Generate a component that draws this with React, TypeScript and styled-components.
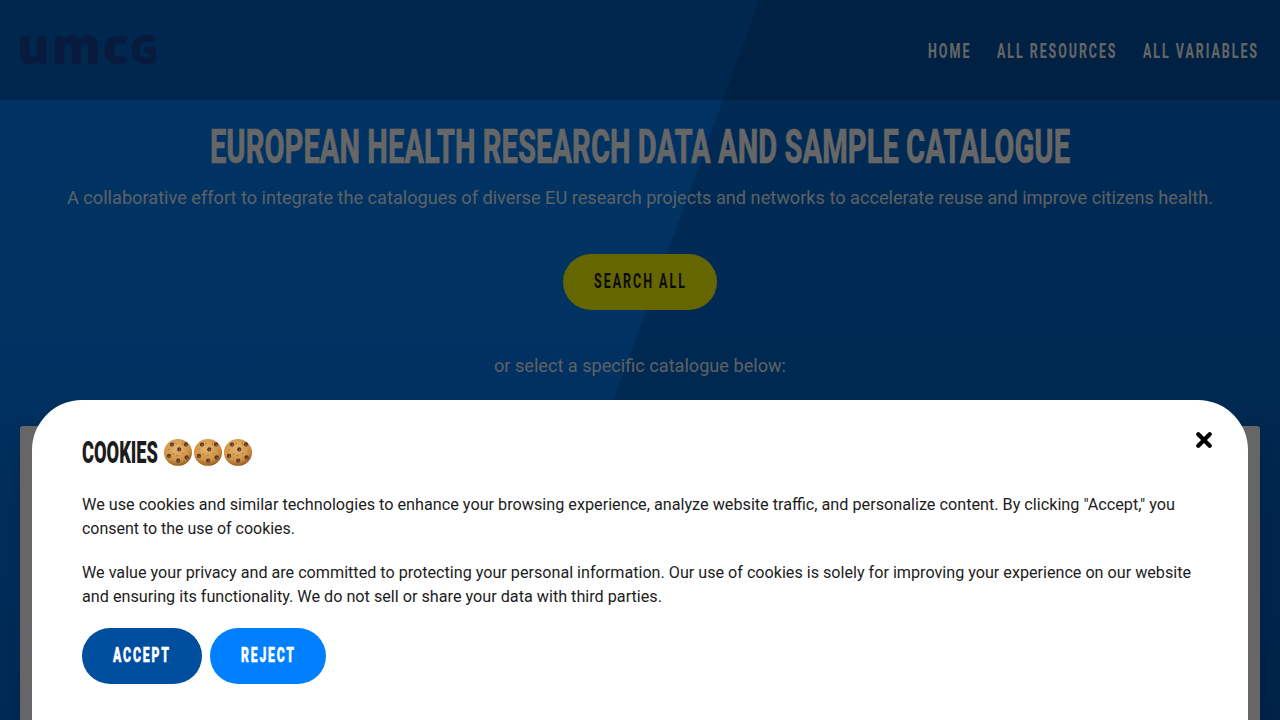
import React, { useLayoutEffect, useRef, useState } from "react";
import styled, { createGlobalStyle } from "styled-components";

const GlobalStyle = createGlobalStyle`
  * { box-sizing: border-box; }
  body { margin: 0; font-family: Roboto, sans-serif; overflow: hidden; }
  h1, h2, p { margin: 0; font-weight: inherit; }
`;

const Page = styled.div`
  height: 720px;
  overflow: hidden;
  color: #fff;
  background:
    linear-gradient(110deg, transparent 713px, rgba(0, 0, 20, 0.17) 714px),
    linear-gradient(180deg, #007ff8 0, #007df5 330px, #006bdc 720px);
`;

const Header = styled.header`
  height: 100px;
  padding: 0 23px 0 17px;
  display: flex;
  align-items: center;
  justify-content: space-between;
  background: rgba(0, 0, 0, 0.2);
`;

const Logo = styled.div`
  display: flex;
  align-items: baseline;
  height: 60px;
  gap: 1px;
  line-height: 60px;
  margin-top: -13px;
  color: #14449e;
  font-family: "Open Sans", sans-serif;
`;

const Nav = styled.nav`
  display: flex;
  gap: 27.5px;
  padding-top: 1px;
`;

const Hero = styled.main`
  display: flex;
  flex-direction: column;
  align-items: center;
`;

const Title = styled.h1`
  height: 60px;
  margin-top: 17px;
  line-height: 60px;
`;

const Lead = styled.p<{ $top: number }>`
  height: 28px;
  margin-top: ${(p) => p.$top}px;
  line-height: 28px;
  color: rgba(255, 255, 255, 0.92);
`;

const Pill = styled.button<{ $bg: string; $fg: string; $w: number }>`
  width: ${(p) => p.$w}px;
  height: 56px;
  padding: 0 2px 2px 0;
  border: 0;
  border-radius: 28px;
  display: flex;
  align-items: center;
  justify-content: center;
  background: ${(p) => p.$bg};
  color: ${(p) => p.$fg};
  font-family: inherit;
`;

const SearchWrap = styled.div`
  margin-top: 42px;
`;

const Card = styled.section`
  width: 1240px;
  height: 500px;
  margin-top: 46px;
  border-radius: 3px;
  background: #fff;
  box-shadow: 0 10px 30px rgba(0, 0, 0, 0.2);
`;

const Backdrop = styled.div`
  position: fixed;
  inset: 0;
  display: flex;
  align-items: flex-end;
  padding: 0 32px;
  background: rgba(0, 0, 0, 0.6);
`;

const Dialog = styled.section`
  width: 100%;
  height: 320px;
  padding: 34px 50px 0;
  position: relative;
  border-radius: 50px 50px 0 0;
  background: #fff;
  color: #1c1c1c;
`;

const DialogTitle = styled.h2`
  display: flex;
  align-items: center;
  height: 36px;
  line-height: 36px;
`;

const Word = styled.span`
  padding-top: 4px;
`;

const Cookies = styled.span`
  display: flex;
  gap: 2px;
  margin-left: 6px;
`;

const Paragraph = styled.p<{ $top: number }>`
  margin-top: ${(p) => p.$top}px;
  line-height: 24px;
`;

const Actions = styled.div`
  display: flex;
  gap: 8px;
  margin-top: 19px;
`;

const Close = styled.button`
  position: absolute;
  top: 32px;
  right: 36px;
  width: 16px;
  height: 16px;
  padding: 0;
  border: 0;
  background: none;
  svg { display: block; }
`;

const FitBox = styled.span<{ $w: number }>`
  display: block;
  width: ${(p) => p.$w}px;
`;

const FitText = styled.span<{ $size: number; $weight: number; $spacing: number; $stroke: number }>`
  display: inline-block;
  white-space: nowrap;
  transform-origin: 0 50%;
  font-size: ${(p) => p.$size}px;
  font-weight: ${(p) => p.$weight};
  letter-spacing: ${(p) => p.$spacing}px;
  -webkit-text-stroke: ${(p) => p.$stroke}px currentColor;
`;

type FitProps = {
  w: number;
  size: number;
  weight?: number;
  spacing?: number;
  stroke?: number;
  children: React.ReactNode;
};

/* Condenses a line of text horizontally so that it fills the given width. */
function Fit({ w, size, weight = 400, spacing = 0, stroke = 0, children }: FitProps) {
  const ref = useRef<HTMLSpanElement>(null);
  const [scale, setScale] = useState(1);
  useLayoutEffect(() => {
    const el = ref.current;
    if (!el) return;
    const natural = parseFloat(getComputedStyle(el).width) - spacing;
    setScale(w / natural);
  }, [w, spacing]);
  return (
    <FitBox $w={w}>
      <FitText
        ref={ref}
        $size={size}
        $weight={weight}
        $spacing={spacing}
        $stroke={stroke}
        style={{ transform: `scaleX(${scale})` }}
      >
        {children}
      </FitText>
    </FitBox>
  );
}

const chips = [
  [8, 6.2], [22, 6], [15.2, 11], [5, 17.5], [22.6, 19], [14.2, 22.3],
];

function Cookie() {
  return (
    <svg width="28" height="28" viewBox="0 0 28 28">
      <defs>
        <radialGradient id="dough" cx="45%" cy="35%" r="65%">
          <stop offset="0" stopColor="#e6b56e" />
          <stop offset="0.7" stopColor="#cf9346" />
          <stop offset="1" stopColor="#9b5d20" />
        </radialGradient>
      </defs>
      <ellipse cx="14" cy="14.4" rx="14" ry="13.4" fill="url(#dough)" />
      <path d="M4 12l2-1M11 5l2 1M18 15l2 1M9 15l1 2M18 4l1 3M12 18l3-1M24 12l1 2M8 23l2 1" stroke="#b57932" strokeWidth="0.8" fill="none" />
      {chips.map(([x, y]) => (
        <g key={`${x}-${y}`}>
          <circle cx={x} cy={y + 0.4} r="2.1" fill="#593321" />
          <circle cx={x + 0.4} cy={y + 0.8} r="0.9" fill="#84675f" />
        </g>
      ))}
    </svg>
  );
}

export default function App() {
  return (
    <>
      <GlobalStyle />
      <Page>
        <Header>
          <Logo>
            <Fit w={112} size={51} weight={800} spacing={2}>umc</Fit>
            <Fit w={29} size={40} weight={800}>G</Fit>
          </Logo>
          <Nav>
            <Fit w={41.5} size={20} weight={700} spacing={3.2}>HOME</Fit>
            <Fit w={118.5} size={20} weight={700} spacing={3.2}>ALL RESOURCES</Fit>
            <Fit w={114} size={20} weight={700} spacing={3.2}>ALL VARIABLES</Fit>
          </Nav>
        </Header>
        <Hero>
          <Title>
            <Fit w={860} size={48} weight={800} stroke={0.3}>EUROPEAN HEALTH RESEARCH DATA AND SAMPLE CATALOGUE</Fit>
          </Title>
          <Lead $top={7}>
            <Fit w={1146} size={18}>
              A collaborative effort to integrate the catalogues of diverse EU research projects and networks to accelerate reuse and improve citizens health.
            </Fit>
          </Lead>
          <SearchWrap>
            <Pill $w={154} $bg="#ffff00" $fg="#1c1c1c">
              <Fit w={91} size={20} weight={700} spacing={3.2}>SEARCH ALL</Fit>
            </Pill>
          </SearchWrap>
          <Lead $top={42}>
            <Fit w={292} size={18}>or select a specific catalogue below:</Fit>
          </Lead>
          <Card />
        </Hero>
      </Page>
      <Backdrop>
        <Dialog>
          <DialogTitle>
            <Word>
              <Fit w={76} size={30.5} weight={900}>COOKIES</Fit>
            </Word>
            <Cookies>
              <Cookie />
              <Cookie />
              <Cookie />
            </Cookies>
          </DialogTitle>
          <Paragraph $top={23}>
            <Fit w={1093} size={16}>
              We use cookies and similar technologies to enhance your browsing experience, analyze website traffic, and personalize content. By clicking "Accept," you
            </Fit>
            <Fit w={213} size={16}>consent to the use of cookies.</Fit>
          </Paragraph>
          <Paragraph $top={20}>
            <Fit w={1109} size={16}>
              We value your privacy and are committed to protecting your personal information. Our use of cookies is solely for improving your experience on our website
            </Fit>
            <Fit w={580} size={16}>
              and ensuring its functionality. We do not sell or share your data with third parties.
            </Fit>
          </Paragraph>
          <Actions>
            <Pill $w={120} $bg="#004f9f" $fg="#fff">
              <Fit w={56} size={20} weight={900} spacing={3} stroke={0.4}>ACCEPT</Fit>
            </Pill>
            <Pill $w={116} $bg="#0080ff" $fg="#fff">
              <Fit w={53} size={20} weight={900} spacing={3} stroke={0.4}>REJECT</Fit>
            </Pill>
          </Actions>
          <Close aria-label="Close">
            <svg width="16" height="16" viewBox="0 0 16 16">
              <path d="M2.3 2.3L13.7 13.7M13.7 2.3L2.3 13.7" stroke="#000" strokeWidth="4.2" strokeLinecap="round" />
            </svg>
          </Close>
        </Dialog>
      </Backdrop>
    </>
  );
}
